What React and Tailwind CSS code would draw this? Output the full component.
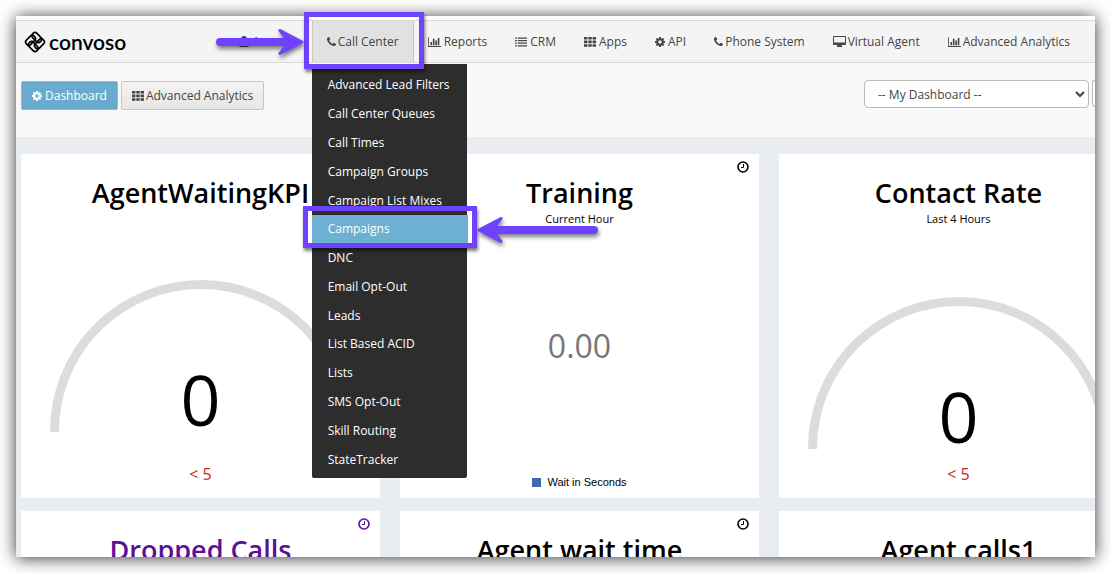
import React, { useState } from 'react';

const ICONS = {
  phone: {
    box: '0 128 1408 1408',
    d: 'M1408 1240q0 27-10 70.5t-21 68.5q-21 50-122 106-94 51-186 51-27 0-53-3.5t-57.5-12.5-47-14.5-55.5-20.5-49-18q-98-35-175-83-127-79-264-216t-216-264q-48-77-83-175-3-9-18-49t-20.5-55.5-14.5-47-12.5-57.5-3.5-53q0-92 51-186 56-101 106-122 25-11 68.5-21t70.5-10q14 0 21 3 18 6 53 76 11 19 30 54t35 63.5 31 53.5q3 4 17.5 25t21.5 35.5 7 28.5q0 20-28.5 50t-62 55-62 53-28.5 46q0 9 5 22.5t8.5 20.5 14 24 11.5 19q76 137 174 235t235 174q2 1 19 11.5t24 14 20.5 8.5 22.5 5q18 0 46-28.5t53-62 55-62 50-28.5q14 0 28.5 7t35.5 21.5 25 17.5q25 15 53.5 31t63.5 35 54 30q70 35 76 53 3 7 3 21z',
  },
  chart: {
    box: '0 128 2048 1536',
    d: 'M640 896v512h-256v-512h256zm384-512v1024h-256v-1024h256zm1024 1152v128h-2048v-1536h128v1408h1920zm-640-896v768h-256v-768h256zm384-384v1152h-256v-1152h256z',
  },
  cog: {
    box: '128 128 1536 1536',
    d: 'M1152 896q0-106-75-181t-181-75-181 75-75 181 75 181 181 75 181-75 75-181zm512-109v222q0 12-8 23t-20 13l-185 28q-19 54-39 91 35 50 107 138 10 12 10 25t-9 23q-27 37-99 108t-94 71q-12 0-26-9l-138-108q-44 23-91 38-16 136-29 186-7 28-36 28h-222q-14 0-24.5-8.5t-11.5-21.5l-28-184q-49-16-90-37l-141 107q-10 9-25 9-14 0-25-11-126-114-165-168-7-10-7-23 0-12 8-23 15-21 51-66.5t54-70.5q-27-50-41-99l-183-27q-13-2-21-12.5t-8-23.5v-222q0-12 8-23t19-13l186-28q14-46 39-92-40-57-107-138-10-12-10-24 0-10 9-23 26-36 98.5-107.5t94.5-71.5q13 0 26 10l138 107q44-23 91-38 16-136 29-186 7-28 36-28h222q14 0 24.5 8.5t11.5 21.5l28 184q49 16 90 37l142-107q9-9 24-9 13 0 25 10 129 119 165 170 7 8 7 22 0 12-8 23-15 21-51 66.5t-54 70.5q26 50 41 98l183 28q13 2 21 12.5t8 23.5z',
  },
  list: {
    box: '0 0 13 10',
    d: 'M0 0h2v1.4h-2zM3 0h10v1.4h-10zM0 2.8h2v1.4h-2zM3 2.8h10v1.4h-10zM0 5.6h2v1.4h-2zM3 5.6h10v1.4h-10zM0 8.4h2v1.4h-2zM3 8.4h10v1.4h-10z',
  },
  grid: {
    box: '0 0 12 10',
    d: 'M0 0h3.4v2.6h-3.4zM4.3 0h3.4v2.6h-3.4zM8.6 0h3.4v2.6h-3.4zM0 3.6h3.4v2.6h-3.4zM4.3 3.6h3.4v2.6h-3.4zM8.6 3.6h3.4v2.6h-3.4zM0 7.2h3.4v2.6h-3.4zM4.3 7.2h3.4v2.6h-3.4zM8.6 7.2h3.4v2.6h-3.4z',
  },
  desktop: {
    box: '0 0 13 11',
    d: 'M1 0h11q1 0 1 1v7q0 1-1 1h-3.500q0 1 .7 1.300v.7h-5.400v-.7q.7-.3.700-1.300h-3.500q-1 0-1-1v-7q0-1 1-1zM1 1v5.500h11v-5.500z',
  },
  user: {
    box: '0 0 10 11',
    d: 'M5 0a2.700 2.700 0 0 1 1.700 4.900q3.300.4 3.300 4.100 0 2-1.500 2h-7q-1.500 0-1.500-2 0-3.700 3.300-4.100a2.700 2.700 0 0 1 1.700-4.900z',
  },
};

const Icon = ({ name, className }) => (
  <svg viewBox={ICONS[name].box} className={`shrink-0 ${className}`} fill="currentColor" fillRule="evenodd" aria-hidden="true">
    <path d={ICONS[name].d} />
  </svg>
);

const Logo = () => (
  <a href="#home" className="flex items-center gap-[3px] text-black">
    <svg viewBox="-20 -20 40 40" className="h-[22px] w-[22px]" fill="none" stroke="currentColor" strokeWidth="3" aria-hidden="true">
      {[45, 135, 225, 315].map((angle) => (
        <rect key={angle} x="-13.500" y="-13.500" width="20" height="11" rx="5" transform={`rotate(${angle})`} />
      ))}
    </svg>
    <span className="font-['Lato',sans-serif] text-[21px] font-semibold leading-6">convoso</span>
  </a>
);

const menuItems = [
  'Advanced Lead Filters', 'Call Center Queues', 'Call Times', 'Campaign Groups',
  'Campaign List Mixes', 'Campaigns', 'DNC', 'Email Opt-Out', 'Leads',
  'List Based ACID', 'Lists', 'SMS Opt-Out', 'Skill Routing', 'StateTracker',
];

const navItems = [
  { label: 'Account', icon: 'user', size: 'w-[10px] h-[11px]', gap: 'gap-[3px]' },
  { label: 'Call Center', icon: 'phone', size: 'w-[9px] h-[9px]', gap: 'gap-[2px]', open: true },
  { label: 'Reports', icon: 'chart', size: 'w-[13px] h-[10px]', gap: 'gap-[3px]' },
  { label: 'CRM', icon: 'list', size: 'w-[12px] h-[10px]', gap: 'gap-[3px]' },
  { label: 'Apps', icon: 'grid', size: 'w-[12px] h-[10px]', gap: 'gap-[3px]' },
  { label: 'API', icon: 'cog', size: 'w-[10px] h-[10px]', gap: 'gap-[3px]' },
  { label: 'Phone System', icon: 'phone', size: 'w-[9px] h-[9px]', gap: 'gap-[2px]' },
  { label: 'Virtual Agent', icon: 'desktop', size: 'w-[13px] h-[11px]', gap: 'gap-[2px]' },
  { label: 'Advanced Analytics', icon: 'chart', size: 'w-[13px] h-[10px]', gap: 'gap-[2px]' },
];

const Arrow = ({ className, flip, length }) => (
  <svg
    width={length}
    height="30"
    viewBox={`0 0 ${length} 30`}
    className={`absolute z-30 overflow-visible drop-shadow-[1px_3px_2px_rgba(0,0,0,0.5)] ${className}`}
    aria-hidden="true"
  >
    <g transform={flip ? `translate(${length} 0) scale(-1 1)` : undefined} fill="#6f42ff" stroke="#6f42ff" strokeLinecap="round" strokeLinejoin="round">
      <path d={`M4 15H${length - 14}`} strokeWidth="8" />
      <path d={`M${length - 24} 3.500L${length - 2} 15L${length - 24} 26.500L${length - 15} 15Z`} strokeWidth="3" />
    </g>
  </svg>
);

const CallCenterMenu = () => (
  <div className="absolute -left-px top-[43px] z-20 flex h-[414px] w-[155px] flex-col rounded-b-xs bg-[#2d2d2d] pb-1 pt-[7px]">
    {menuItems.map((item) =>
      item === 'Campaigns' ? (
        <div key={item} className="relative flex flex-1">
          <a href="#campaigns" className="flex w-[156px] shrink-0 items-center bg-[#6eb0d1] pl-4 text-white">{item}</a>
          <span className="pointer-events-none absolute -left-[9px] -top-[9px] h-[42px] w-[174px] border-5 border-[#6f42ff] shadow-[1px_3px_3px_rgba(0,0,0,0.5)]" />
          <Arrow className="left-[165px] top-0" length={121} flip />
        </div>
      ) : (
        <a key={item} href={`#${item}`} className="flex flex-1 items-center pl-4 text-white">{item}</a>
      )
    )}
  </div>
);

const NavItem = ({ item }) => (
  <li className={`relative ${item.open ? 'border-x border-[#c8c8c8] bg-[#e1e1e1]' : ''}`}>
    <a href={`#${item.label}`} className={`flex h-full items-center px-[14px] ${item.gap}`}>
      <Icon name={item.icon} className={item.size} />
      {item.label}
    </a>
    {item.open && (
      <>
        <CallCenterMenu />
        <span className="pointer-events-none absolute -left-[9px] -top-[9px] z-30 h-[57px] w-[120px] border-5 border-[#6f42ff] shadow-[1px_3px_3px_rgba(0,0,0,0.5)]" />
        <Arrow className="-left-[97px] top-[6px]" length={88} />
      </>
    )}
  </li>
);

const Gauge = () => (
  <div className="relative mx-auto w-[302px]">
    <svg viewBox="0 0 302 152" className="block w-full" fill="none" aria-hidden="true">
      <path d="M4.500 152V151a146.500 146.500 0 0 1 293 0V152" stroke="#dcdcdc" strokeWidth="9" />
    </svg>
    <span className="absolute inset-x-0 bottom-0 text-center text-[70px] leading-[66px] text-black">0</span>
  </div>
);

const ClockIcon = () => (
  <svg viewBox="0 0 12 12" className="absolute right-[10px] top-[7px] h-3 w-3" fill="none" stroke="currentColor" aria-hidden="true">
    <circle cx="6" cy="6" r="5" strokeWidth="1.600" />
    <path d="M6.500 3v3.500H4" strokeWidth="1" />
  </svg>
);

const Card = ({ title, subtitle, color = 'text-black', children }) => (
  <section className={`relative flex h-[344px] flex-col bg-white pt-[21px] text-center ${color}`}>
    <ClockIcon />
    <h2 className="text-[27px] font-semibold leading-9">{title}</h2>
    {subtitle && <p className="mb-[2px] text-[11px] leading-[15px]">{subtitle}</p>}
    {children}
  </section>
);

const GaugeCard = ({ title, subtitle }) => (
  <Card title={title} subtitle={subtitle}>
    <div className="h-[69px]" />
    <Gauge />
    <p className="mb-3 mt-auto text-base text-[#c22c22]">&lt; 5</p>
  </Card>
);

const App = () => {
  const [dashboard, setDashboard] = useState('mine');

  return (
    <div className="h-screen overflow-hidden bg-white p-4 font-['Open_Sans',sans-serif] text-[12px] text-[#444]">
      <div className="flex h-full flex-col bg-white pt-1 shadow-[0_1px_16px_rgba(0,0,0,0.8)]">
        <header className="flex h-[43px] shrink-0 items-stretch justify-between border-y border-[#d9d9d9] bg-[#f4f4f4] pl-2 pr-[11px]">
          <Logo />
          <nav className="flex">
            <ul className="flex whitespace-nowrap">
              {navItems.map((item) => (
                <NavItem key={item.label} item={item} />
              ))}
            </ul>
          </nav>
        </header>

        <div className="flex min-h-0 grow flex-col overflow-hidden">
          <div className="flex h-[74px] shrink-0 items-start bg-[#f9f9f9] pl-[5px] pt-[17px]">
            <div className="flex grow gap-[3px] pt-px">
              <button className="flex h-[29px] items-center gap-[3px] rounded-xs border border-[#9cb8c6] bg-[#68abcc] px-[10px] text-white">
                <Icon name="cog" className="h-[10px] w-[10px]" />
                Dashboard
              </button>
              <button className="flex h-[29px] items-center gap-[2px] rounded-xs border border-[#c5c5c5] bg-linear-to-b from-[#f3f3f3] to-[#e6e6e6] px-[10px]">
                <Icon name="grid" className="h-[10px] w-[12px]" />
                Advanced Analytics
              </button>
            </div>
            <select
              aria-label="Dashboard"
              value={dashboard}
              onChange={(e) => setDashboard(e.target.value)}
              className="h-[28px] w-[225px] rounded-sm border border-[#bbb] bg-white pl-[9px]"
            >
              <option value="mine">-- My Dashboard --</option>
            </select>
            <button aria-label="Dashboard options" className="ml-[3px] h-[27px] w-[3px] rounded-l-sm border border-r-0 border-[#bbb] bg-white" />
          </div>

          <main className="-mr-[43px] grid grow grid-cols-3 content-start gap-x-5 gap-y-[13px] bg-[#e9ecf1] pl-[5px] pt-[17px]">
            <GaugeCard title="AgentWaitingKPI" />
            <Card title="Training" subtitle="Current Hour">
              <p className="mt-24 text-[32px] leading-11 text-[#777]">0.00</p>
              <p className="mb-2 mt-auto flex items-center justify-center gap-[6px] font-['Liberation_Sans',sans-serif] text-[11px] leading-4">
                <span className="h-[9px] w-[9px] bg-[#3f69ad]" />
                Wait in Seconds
              </p>
            </Card>
            <GaugeCard title="Contact Rate" subtitle="Last 4 Hours" />
            <Card title="Dropped Calls" color="text-[#5c0f96]" />
            <Card title="Agent wait time" />
            <Card title="Agent calls1" />
          </main>
        </div>
      </div>
    </div>
  );
};

export default App;
